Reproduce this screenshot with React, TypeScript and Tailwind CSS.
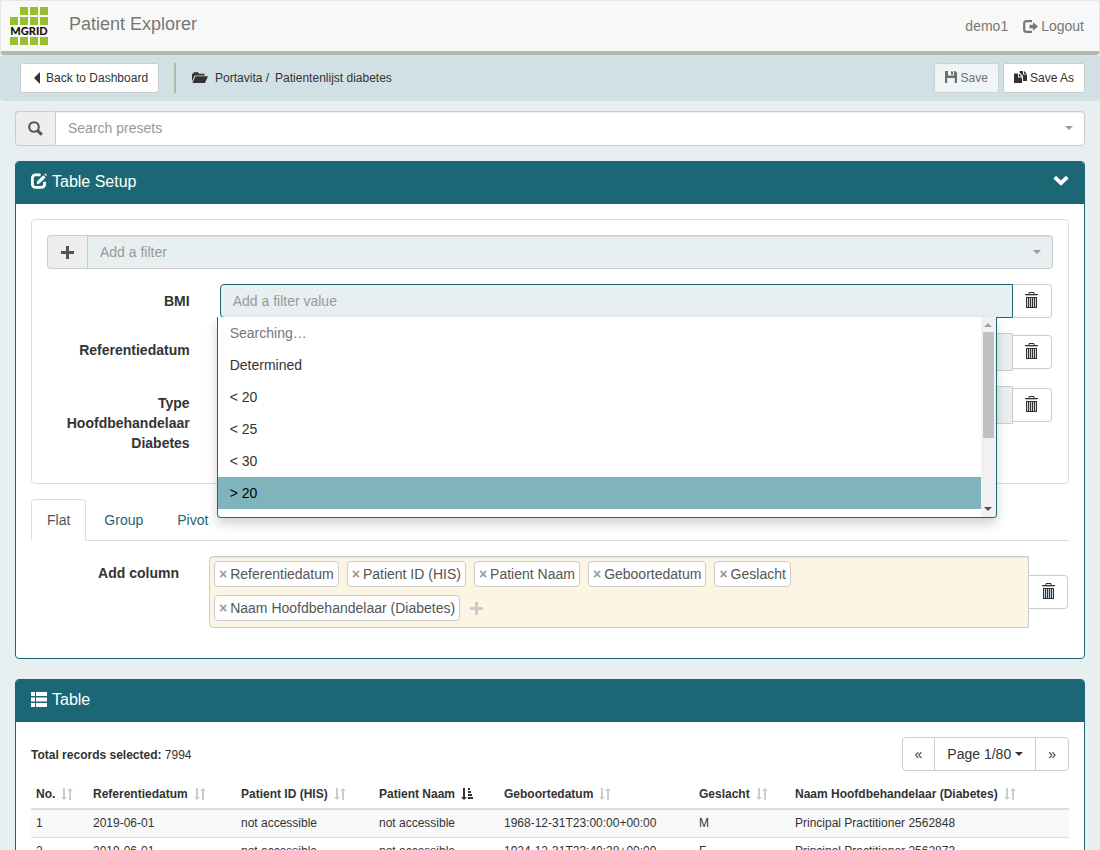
import { useState } from "react";
import type { ReactNode } from "react";

interface IconProps {
  className?: string;
}

const columns = [
  { label: "No.", width: "w-[57px]" },
  { label: "Referentiedatum", width: "w-[148px]" },
  { label: "Patient ID (HIS)", width: "w-[138px]" },
  { label: "Patient Naam", width: "w-[125px]", sorted: true },
  { label: "Geboortedatum", width: "w-[195px]" },
  { label: "Geslacht", width: "w-[96px]" },
  { label: "Naam Hoofdbehandelaar (Diabetes)", width: "" },
];

const rows = [
  ["1", "2019-06-01", "not accessible", "not accessible", "1968-12-31T23:00:00+00:00", "M", "Principal Practitioner 2562848"],
  ["2", "2019-06-01", "not accessible", "not accessible", "1924-12-31T23:40:28+00:00", "F", "Principal Practitioner 2562873"],
];

const filterValues = ["Determined", "< 20", "< 25", "< 30", "> 20"];

const initialTags = [
  "Referentiedatum",
  "Patient ID (HIS)",
  "Patient Naam",
  "Geboortedatum",
  "Geslacht",
  "Naam Hoofdbehandelaar (Diabetes)",
];

function Logo() {
  const squares = [
    [10, 0], [20, 0], [30, 0],
    [0, 10], [10, 10], [20, 10], [30, 10],
    [0, 30], [10, 30], [20, 30], [30, 30],
  ];
  return (
    <svg width="38" height="38" viewBox="0 0 38 38" role="img" aria-label="MGRID">
      {squares.map(([x, y]) => (
        <rect key={`${x}-${y}`} x={x} y={y} width="8" height="8" fill="#97bf2f" />
      ))}
      <text
        x="19"
        y="28"
        textAnchor="middle"
        fontSize="11"
        fontWeight="900"
        fontFamily="Lato, 'Open Sans', sans-serif"
        fill="#111"
      >
        MGRID
      </text>
    </svg>
  );
}

function LogoutIcon() {
  return (
    <svg width="15" height="13" viewBox="0 0 15 13">
      <path d="M9 1.2H3.6A2.4 2.4 0 0 0 1.2 3.6v5.8a2.4 2.4 0 0 0 2.4 2.4H9" fill="none" stroke="currentColor" strokeWidth="2.2" />
      <path d="M6.5 4.7H10V2.2l5 4.3-5 4.3V8.3H6.5z" fill="currentColor" />
    </svg>
  );
}

function FolderIcon() {
  return (
    <svg className="mb-0.5" width="16" height="11" viewBox="0 0 16 11" fill="currentColor">
      <path d="M0 9.4V1.8h1L2 .2h4l1 1.6h5.6v1.6H2.6z" />
      <path d="M3.4 4.2H16L13 11H.5z" />
    </svg>
  );
}

function FloppyIcon() {
  return (
    <svg className="mb-0.5" width="12" height="12" viewBox="0 0 12 12">
      <path
        d="M0 0h3v4.5h6V0h1.2L12 1.8V12H9.8V7H2.2v5H0zM6 .4h2v3H6z"
        fill="currentColor"
      />
    </svg>
  );
}

function DuplicateIcon() {
  return (
    <svg className="mb-0.5" width="13" height="12" viewBox="0 0 13 12" fill="currentColor">
      <path d="M0 2.5h4v4h4V12H0z" />
      <path d="M4.8 2.4l3 3h-3z" />
      <path d="M5.5 0H9v3.6h4V10H9V5L5.5 1.6z" />
      <path d="M10 0l3 2.8h-3z" />
    </svg>
  );
}

function SearchIcon() {
  return (
    <svg width="15" height="15" viewBox="0 0 15 15" fill="none" stroke="currentColor">
      <circle cx="6" cy="6" r="4.8" strokeWidth="2.1" />
      <path d="M9.6 9.6l4.2 4.2" strokeWidth="3" />
    </svg>
  );
}

function EditIcon() {
  return (
    <svg className="mb-0.5" width="16" height="16" viewBox="0 0 16 16">
      <path
        d="M9.6 1.9H4.4a3 3 0 0 0-3 3v6.4a3 3 0 0 0 3 3h6.2a3 3 0 0 0 3-3V8.8"
        fill="none"
        stroke="currentColor"
        strokeWidth="2.8"
      />
      <path d="M5.6 11.2l.8-3.2 6-5.8 2.2 2.2-6.2 6zM13.3 1.3l1-.9L16 2l-1 1z" fill="currentColor" />
    </svg>
  );
}

function ChevronIcon() {
  return (
    <svg className="mb-1" width="16" height="11" viewBox="0 0 16 11">
      <path d="M1.7 2.2L8 8.2l6.3-6" fill="none" stroke="currentColor" strokeWidth="3.8" />
    </svg>
  );
}

function PlusIcon({ className }: IconProps) {
  return (
    <svg className={className} viewBox="0 0 13 13" fill="currentColor">
      <path d="M5 0h3v5h5v3H8v5H5V8H0V5h5z" />
    </svg>
  );
}

function TrashIcon() {
  return (
    <svg width="13" height="16" viewBox="0 0 13 16">
      <path d="M4 2V.5h5V2" fill="none" stroke="#333" strokeWidth="1" />
      <path d="M0 2h13v1H0z" fill="#333" />
      <path d="M1 3h11v1H1z" fill="#bbb" />
      <path d="M1 5h11v11H1z" fill="#333" />
      <path d="M2 6h1v9H2zM4 6h1v9H4zM6 6h1v9H6zM8 6h1v9H8zM10 6h1v9h-1z" fill="#c3d3e0" />
    </svg>
  );
}

function ListIcon() {
  return (
    <svg className="mb-0.5" width="16" height="15" viewBox="0 0 16 15" fill="currentColor">
      <path d="M0 0h4v4H0zM5 0h11v4H5zM0 5.5h4v4H0zM5 5.5h11v4H5zM0 11h4v4H0zM5 11h11v4H5z" />
    </svg>
  );
}

function SortIcon() {
  return (
    <svg className="text-[#ccc]" width="12" height="12" viewBox="0 0 12 12" fill="currentColor">
      <path d="M2 0h2v9h2l-3 3-3-3h2zM8 12h2V3h2L9 0 6 3h2z" />
    </svg>
  );
}

function SortedIcon() {
  return (
    <svg width="12" height="12" viewBox="0 0 12 12" fill="currentColor">
      <path d="M2 0h2v9h2l-3 3-3-3h2zM7 0h2v2H7zM7 3h3v2H7zM7 6h4v2H7zM7 9h5v2H7z" />
    </svg>
  );
}

function Caret({ className }: IconProps) {
  return (
    <svg className={className} width="8" height="4" viewBox="0 0 8 4" fill="currentColor">
      <path d="M0 0h8L4 4z" />
    </svg>
  );
}

function TrashButton({ label }: { label: string }) {
  return (
    <button
      type="button"
      aria-label={label}
      className="flex h-[34px] w-[39px] shrink-0 items-center justify-center rounded-r border border-l-0 border-[#ccc] bg-white pb-0.5"
    >
      <TrashIcon />
    </button>
  );
}

function Panel({ icon, title, action, children }: { icon: ReactNode; title: string; action?: ReactNode; children: ReactNode }) {
  return (
    <section className="mx-[15px] rounded border border-[#1c6775] bg-white">
      <header className="flex h-[42px] items-center justify-between rounded-t-[3px] bg-[#1c6775] px-[15px] pb-0.5 text-white">
        <h3 className="flex items-center gap-[5px] text-base">
          {icon}
          {title}
        </h3>
        {action}
      </header>
      <div className="p-[15px]">{children}</div>
    </section>
  );
}

function PlaceholderSelect({ label, className }: { label: string; className: string }) {
  return (
    <div className="relative min-w-0 flex-1">
      <select
        aria-label={label}
        className={`h-full w-full appearance-none rounded-r border border-[#ccc] pl-3 text-sm text-[#999] shadow-[inset_0_1px_1px_rgba(0,0,0,0.075)] ${className}`}
      >
        <option>{label}</option>
      </select>
      <Caret className="pointer-events-none absolute right-3 top-[15px] text-[#999]" />
    </div>
  );
}

function FilterDropdown() {
  return (
    <div className="absolute -left-[3px] right-[55px] top-[33px] z-10 flex h-[201px] overflow-hidden rounded-b border border-t-0 border-[#1c6775] bg-white shadow-[0_6px_12px_rgba(0,0,0,0.175)]">
      <ul role="listbox" aria-label="BMI values" className="flex-1 text-sm">
        <li className="px-3 py-1.5 text-[#777]">Searching…</li>
        {filterValues.map((value) => (
          <li
            key={value}
            role="option"
            aria-selected={value === "> 20"}
            className={`px-3 py-1.5 ${value === "> 20" ? "bg-[#7fb4bd] text-black" : ""}`}
          >
            {value}
          </li>
        ))}
      </ul>
      <div className="flex w-[15px] flex-col items-center bg-[#f1f1f1] py-1.5">
        <Caret className="rotate-180 text-[#a3a3a3]" />
        <div className="mt-[5px] h-[106px] w-[11px] bg-[#c1c1c1]" />
        <Caret className="mt-auto text-[#505050]" />
      </div>
    </div>
  );
}

function FilterRow({ label, open }: { label: string; open?: boolean }) {
  const id = label.split(" ")[0].toLowerCase();
  return (
    <div className="-mx-[15px] mt-[15px] flex">
      <label htmlFor={id} className="w-1/6 px-[15px] pt-[7px] text-right font-bold">
        {label}
      </label>
      <div className="w-5/6 pl-[15px] pr-4">
        <div className="relative flex items-center">
          <input
            id={id}
            type="text"
            placeholder={open ? "Add a filter value" : ""}
            className={`min-w-0 flex-1 rounded-l border bg-[#e7eff0] px-3 placeholder:text-[#999] ${
              open ? "h-[34px] border-[#1c6775]" : "h-[38px] border-[#ccc]"
            }`}
          />
          <TrashButton label={`Remove ${label}`} />
          {open && <FilterDropdown />}
        </div>
      </div>
    </div>
  );
}

function ColumnPicker() {
  const [tags, setTags] = useState(initialTags);

  return (
    <div className="-mx-[15px] mt-[15px] mb-[15px] flex">
      <div className="w-1/6 px-[15px] pt-[7px] text-right font-bold">Add column</div>
      <div className="flex w-5/6 items-center pl-[15px] pr-4">
        <div className="flex flex-1 flex-wrap items-center gap-2 rounded-l border border-[#ccc] bg-[#fdf5e3] px-1 pt-1 pb-1.5 shadow-[inset_0_1px_1px_rgba(0,0,0,0.075)]">
          {tags.map((tag) => (
            <span key={tag} className="flex h-[26px] items-center gap-[3px] rounded border border-[#ccc] bg-white px-1 text-[#555]">
              <button
                type="button"
                aria-label={`Remove ${tag}`}
                className="font-bold text-[#999]"
                onClick={() => setTags(tags.filter((t) => t !== tag))}
              >
                ×
              </button>
              {tag}
            </span>
          ))}
          <button type="button" aria-label="Add column" className="px-0.5">
            <PlusIcon className="size-[13px] text-[#ccc]" />
          </button>
        </div>
        <TrashButton label="Remove all columns" />
      </div>
    </div>
  );
}

function Tabs() {
  const [active, setActive] = useState("Flat");

  return (
    <div role="tablist" className="mt-[15px] flex gap-0.5 border-b border-[#ddd]">
      {["Flat", "Group", "Pivot"].map((tab) => (
        <button
          key={tab}
          type="button"
          role="tab"
          aria-selected={tab === active}
          onClick={() => setActive(tab)}
          className={`-mb-px h-[42px] rounded-t border px-[15px] ${
            tab === active ? "border-[#ddd] border-b-white bg-white text-[#555]" : "border-transparent text-[#1c6775]"
          }`}
        >
          {tab}
        </button>
      ))}
    </div>
  );
}

function PatientTable() {
  return (
    <table className="mt-2 w-full text-left text-xs">
      <thead>
        <tr className="border-b-2 border-[#ddd]">
          {columns.map((col) => (
            <th key={col.label} className={`h-[30px] whitespace-nowrap px-[5px] font-bold ${col.width}`}>
              <span className="flex items-center gap-1.5">
                {col.label}
                {col.sorted ? <SortedIcon /> : <SortIcon />}
              </span>
            </th>
          ))}
        </tr>
      </thead>
      <tbody>
        {rows.map((row) => (
          <tr key={row[0]} className="border-b border-[#ddd] odd:bg-[#f9f9f9]">
            {row.map((cell, i) => (
              <td key={i} className="h-7 px-[5px]">
                {cell}
              </td>
            ))}
          </tr>
        ))}
      </tbody>
    </table>
  );
}

export default function App() {
  return (
    <div className="h-screen overflow-hidden bg-[#e7eff0] font-['Liberation_Sans',Arial,sans-serif] text-sm text-[#333]">
      <nav className="flex h-[55px] justify-between rounded border border-b-4 border-[#e7e7e7] border-b-[#b2b8aa] bg-[#f8f8f8] pl-[9px] pr-[15px] text-[#777]">
        <div className="flex gap-[21px] pt-1.5">
          <Logo />
          <span className="pt-[3px] text-lg">Patient Explorer</span>
        </div>
        <div className="flex items-center gap-[15px]">
          <span>demo1</span>
          <a href="#logout" className="flex items-center gap-[3px]">
            <LogoutIcon />
            Logout
          </a>
        </div>
      </nav>

      <div className="flex items-center justify-between rounded bg-[#d1e0e5] py-2 pl-5 pr-[15px] text-xs">
        <div className="flex items-center">
          <button type="button" className="flex h-[30px] items-center gap-1.5 rounded-[3px] border border-[#ccc] bg-white pl-[13px] pr-2.5">
            <svg width="6" height="12" viewBox="0 0 6 12" fill="currentColor">
              <path d="M6 0v12L0 6z" />
            </svg>
            Back to Dashboard
          </button>
          <div className="ml-[15px] mr-4 h-[30px] w-0.5 bg-[#b2b8aa]" />
          <FolderIcon />
          <span className="ml-[7px]">Portavita /</span>
          <span className="ml-1.5">Patientenlijst diabetes</span>
        </div>
        <div className="flex gap-1">
          <button type="button" disabled className="flex h-[30px] items-center gap-1 rounded-[3px] border border-[#ccc] bg-white px-2.5 opacity-65">
            <FloppyIcon />
            Save
          </button>
          <button type="button" className="flex h-[30px] items-center gap-[3px] rounded-[3px] border border-[#ccc] bg-white px-2.5">
            <DuplicateIcon />
            Save As
          </button>
        </div>
      </div>

      <div className="mx-[15px] mt-2.5 mb-[15px] flex h-[35px]">
        <span className="flex w-10 items-center justify-center rounded-l border border-r-0 border-[#ccc] bg-[#eee] text-[#555]">
          <SearchIcon />
        </span>
        <PlaceholderSelect label="Search presets" className="bg-white pb-px" />
      </div>

      <Panel
        icon={<EditIcon />}
        title="Table Setup"
        action={
          <button type="button" aria-label="Collapse table setup">
            <ChevronIcon />
          </button>
        }
      >
        <div className="rounded border border-[#ddd] p-[15px]">
          <div className="flex h-[34px]">
            <span className="flex w-10 items-center justify-center rounded-l border border-r-0 border-[#ccc] bg-[#eee] text-[#555]">
              <PlusIcon className="size-[13px]" />
            </span>
            <PlaceholderSelect label="Add a filter" className="bg-[#e7eff0]" />
          </div>
          <FilterRow label="BMI" open />
          <FilterRow label="Referentiedatum" />
          <FilterRow label="Type Hoofdbehandelaar Diabetes" />
          <div className="h-[15px]" />
        </div>
        <Tabs />
        <ColumnPicker />
      </Panel>

      <div className="h-5" />

      <Panel icon={<ListIcon />} title="Table">
        <div className="flex items-center justify-between">
          <p className="pt-0.5 text-xs">
            <strong>Total records selected:</strong> 7994
          </p>
          <div className="flex h-[34px] divide-x divide-[#ccc] rounded border border-[#ccc] bg-white">
            <button type="button" aria-label="Previous page" className="px-3">
              «
            </button>
            <button type="button" className="flex items-center gap-1 px-3">
              Page 1/80
              <Caret />
            </button>
            <button type="button" aria-label="Next page" className="px-3">
              »
            </button>
          </div>
        </div>
        <PatientTable />
      </Panel>
    </div>
  );
}
